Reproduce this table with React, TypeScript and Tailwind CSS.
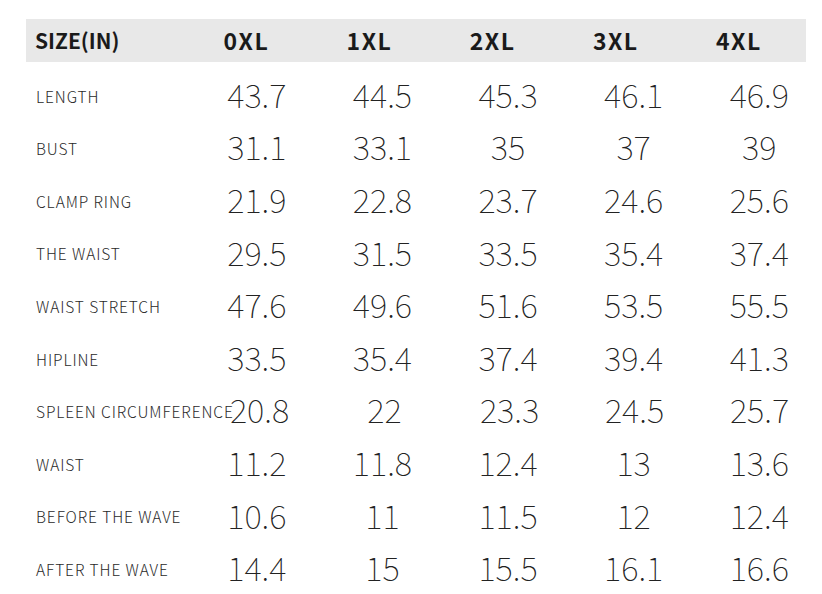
import React from 'react';

const sizes = ['0XL', '1XL', '2XL', '3XL', '4XL'];

const rows: { label: string; values: string[] }[] = [
  { label: 'LENGTH', values: ['43.7', '44.5', '45.3', '46.1', '46.9'] },
  { label: 'BUST', values: ['31.1', '33.1', '35', '37', '39'] },
  { label: 'CLAMP RING', values: ['21.9', '22.8', '23.7', '24.6', '25.6'] },
  { label: 'THE WAIST', values: ['29.5', '31.5', '33.5', '35.4', '37.4'] },
  { label: 'WAIST STRETCH', values: ['47.6', '49.6', '51.6', '53.5', '55.5'] },
  { label: 'HIPLINE', values: ['33.5', '35.4', '37.4', '39.4', '41.3'] },
  { label: 'SPLEEN CIRCUMFERENCE', values: ['20.8', '22', '23.3', '24.5', '25.7'] },
  { label: 'WAIST', values: ['11.2', '11.8', '12.4', '13', '13.6'] },
  { label: 'BEFORE THE WAVE', values: ['10.6', '11', '11.5', '12', '12.4'] },
  { label: 'AFTER THE WAVE', values: ['14.4', '15', '15.5', '16.1', '16.6'] },
];

const App: React.FC = () => {
  return (
    <div
      className="w-[822px] h-[594px] overflow-hidden bg-white pt-[19px]"
      style={{ fontFamily: '"Noto Sans CJK SC", "Noto Sans", sans-serif' }}
    >
      {/* header band */}
      <div className="ml-[26px] w-[780px] h-[43px] bg-[#e8e8e8] flex items-center">
        <div className="w-[171px] pl-[9px] text-[21px] font-bold text-[#1a1a1a]">
          SIZE(IN)
        </div>
        {sizes.map((s) => (
          <div key={s} className="w-[128px] pr-[11px] text-center text-[23px] font-bold text-[#1a1a1a] tracking-[1.5px]">
            {s}
          </div>
        ))}
      </div>

      <div className="mt-[8px]">
        {rows.map((row) => (
          <div key={row.label} className="flex items-center h-[52.6px]">
            <div className="w-[197px] pl-[36px] text-[15.5px] font-light text-[#2a2a2a] whitespace-nowrap tracking-[0.9px]">
              {row.label}
            </div>
            {row.values.map((v, i) => (
              <div key={i} className="w-[128px] text-center text-[33px] font-thin text-[#222] leading-none pb-[4px]">
                {v}
              </div>
            ))}
          </div>
        ))}
      </div>
    </div>
  );
};

export default App;
